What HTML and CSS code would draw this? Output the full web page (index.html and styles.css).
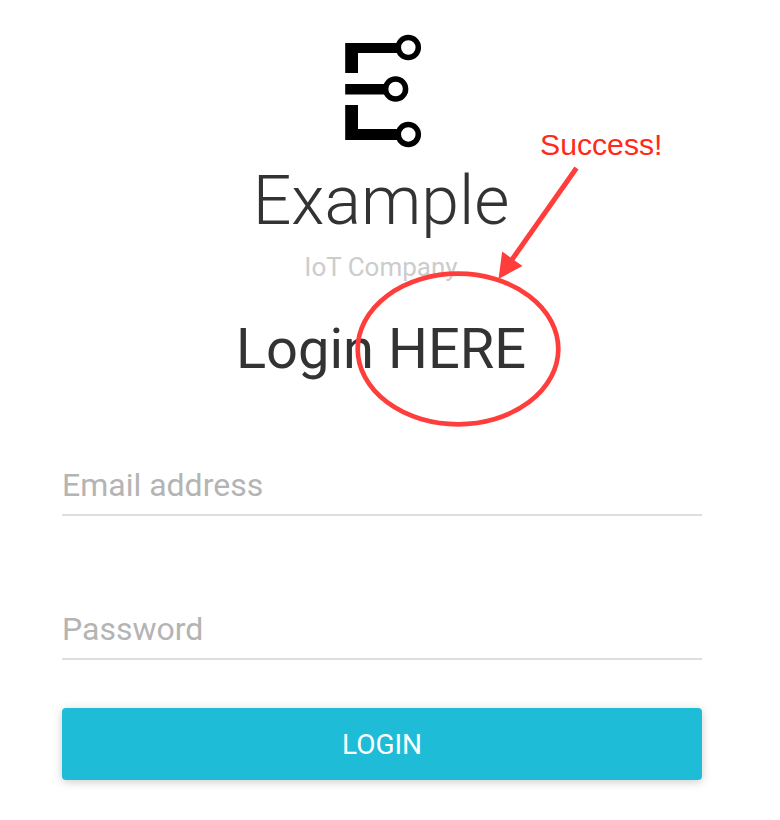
FILE: index.html
```html
<!DOCTYPE html>
<html lang="en">
<head>
<meta charset="utf-8">
<title>Example - Login</title>
<link rel="stylesheet" href="styles.css">
</head>
<body>
<main class="login">
  <svg class="logo" width="80" height="116" viewBox="342 33 80 116" aria-hidden="true">
    <path d="M345.200 43H400V53H358V73H345.200ZM345.200 84H387V94.500H345.200ZM345.200 105H358V129H400V140H345.200Z"/>
    <g fill="#fff" stroke="#000" stroke-width="5.500">
      <circle cx="408.300" cy="47.500" r="10"/>
      <circle cx="395.600" cy="89" r="10"/>
      <circle cx="408.300" cy="134.400" r="10"/>
    </g>
  </svg>
  <h1 class="brand">Example</h1>
  <p class="tagline">IoT Company</p>
  <h2 class="heading">Login HERE</h2>
  <form class="form">
    <input class="field" type="email" placeholder="Email address" aria-label="Email address">
    <input class="field" type="password" placeholder="Password" aria-label="Password">
    <button class="submit" type="button">LOGIN</button>
  </form>
</main>
<div class="note">Success!</div>
<svg class="annotation" width="780" height="820" viewBox="0 0 780 820" fill="none" stroke="#ff3e3c" aria-hidden="true">
  <ellipse cx="458" cy="349" rx="100.300" ry="75.300" stroke-width="4.700"/>
  <path d="M576.500 168L511 261" stroke-width="5"/>
  <path d="M498.500 279L502.200 251.500L522.500 266Z" fill="#ff3e3c" stroke="none"/>
</svg>
</body>
</html>
```
FILE: styles.css
```css
* {
  box-sizing: border-box;
}

body {
  position: relative;
  margin: 0;
  height: 820px;
  overflow: hidden;
  background: #fff;
  color: #333;
  font-family: Roboto, sans-serif;
}

.login {
  display: flex;
  flex-direction: column;
  align-items: center;
  width: 640px;
  margin-left: 62px;
  padding-top: 33px;
}

.logo {
  display: block;
  margin-bottom: 12px;
}

.brand,
.tagline,
.heading {
  margin: 0;
  padding-right: 2px;
  white-space: nowrap;
}

.brand {
  font-size: 68px;
  font-weight: 300;
  line-height: 80px;
}

.tagline {
  margin-top: 10px;
  color: #ccc;
  font-size: 26px;
  line-height: 32px;
}

.heading {
  margin-top: 34px;
  font-size: 56px;
  font-weight: 400;
  line-height: 64px;
}

.form {
  display: flex;
  flex-direction: column;
  width: 100%;
  margin-top: 84px;
}

.field {
  width: 100%;
  height: 51px;
  margin: 0 0 93px;
  padding: 0 0 9px;
  border: 0;
  border-bottom: 2px solid #ddd;
  border-radius: 0;
  outline: 0;
  background: transparent;
  font: 32px/40px Roboto, sans-serif;
}

.field::placeholder {
  color: #b4b4b4;
  opacity: 1;
}

.field + .field {
  margin-bottom: 48px;
}

.submit {
  height: 72px;
  padding: 2px 0 0;
  border: 0;
  border-radius: 4px;
  background: #1fbcd7;
  box-shadow: 0 2px 10px rgba(0, 0, 0, 0.2);
  color: #fff;
  font: 28px/70px Roboto, sans-serif;
}

.note {
  position: absolute;
  top: 127px;
  left: 540px;
  color: #ff2a1a;
  font: 30.2px/36px "Liberation Sans", Arial, sans-serif;
}

.annotation {
  position: absolute;
  top: 0;
  left: 0;
  pointer-events: none;
}
```
